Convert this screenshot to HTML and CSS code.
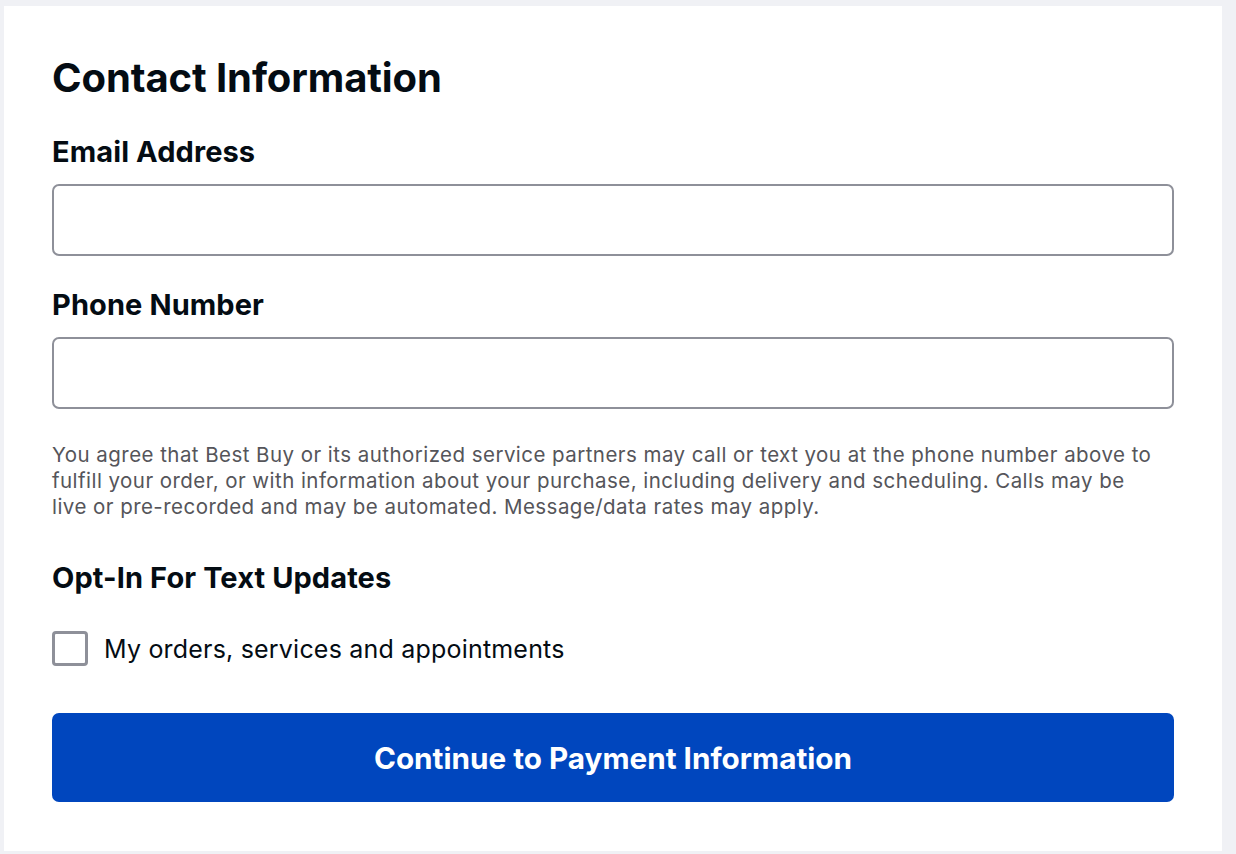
FILE: index.html
```html
<!DOCTYPE html>
<html lang="en">
<head>
<meta charset="utf-8">
<title>Contact Information</title>
<link rel="stylesheet" href="styles.css">
</head>
<body>
<main class="card">
  <h1 class="title">Contact Information</h1>
  <form class="form">
    <label class="field-label" for="email">Email Address</label>
    <input class="text-input" id="email" type="email">
    <label class="field-label field-label--next" for="phone">Phone Number</label>
    <input class="text-input" id="phone" type="tel">
    <p class="disclaimer">You agree that Best Buy or its authorized service partners may call or text you at the phone number above to fulfill your order, or with information about your purchase, including delivery and scheduling. Calls may be live or pre-recorded and may be automated. Message/data rates may apply.</p>
    <h2 class="section-title">Opt-In For Text Updates</h2>
    <label class="check-row">
      <span class="checkbox"></span>
      <span class="check-text">My orders, services and appointments</span>
    </label>
    <button class="primary-btn" type="button">Continue to Payment Information</button>
  </form>
</main>
</body>
</html>
```
FILE: styles.css
```css
* { box-sizing: border-box; }
html, body { margin: 0; padding: 0; }
body {
  background: #f0f1f5;
  padding: 6px 14px 0 4px;
  height: 854px;
  overflow: hidden;
  font-family: Inter, "Noto Sans", sans-serif;
  color: #040c13;
}
.card {
  background: #ffffff;
  height: 845px;
  padding: 48px 48px 0 48px;
}
.title {
  margin: 0;
  font-size: 40px;
  line-height: 48px;
  font-weight: 700;
  letter-spacing: -0.1px;
}
.form { display: flex; flex-direction: column; }
.field-label {
  margin-top: 32px;
  font-size: 29px;
  line-height: 36px;
  font-weight: 700;
  letter-spacing: 0.1px;
}
.field-label--next { margin-top: 31px; }
.text-input {
  margin-top: 14px;
  height: 72px;
  width: 100%;
  border: 2px solid #8e9099;
  border-radius: 7px;
  background: #fff;
  font: inherit;
}
.disclaimer {
  margin: 33px 0 0 0;
  max-width: 1108px;
  font-size: 20.5px;
  line-height: 26px;
  letter-spacing: 0.45px;
  color: #55555a;
}
.section-title {
  margin: 40px 0 0 0;
  font-size: 29px;
  line-height: 36px;
  font-weight: 700;
  letter-spacing: 0.1px;
}
.check-row {
  margin-top: 35px;
  display: flex;
  align-items: center;
  gap: 16px;
}
.checkbox {
  width: 36px;
  height: 35px;
  border: 3px solid #8e9099;
  border-radius: 4px;
  flex: none;
}
.check-text {
  font-size: 25px;
  line-height: 34px;
  letter-spacing: 0.2px;
  color: #040c13;
}
.primary-btn {
  margin-top: 47px;
  height: 89px;
  width: 100%;
  border: none;
  border-radius: 7px;
  background: #0046be;
  color: #ffffff;
  font-family: Inter, "Noto Sans", sans-serif;
  font-size: 29.7px;
  font-weight: 700;
  letter-spacing: 0;
}
```
